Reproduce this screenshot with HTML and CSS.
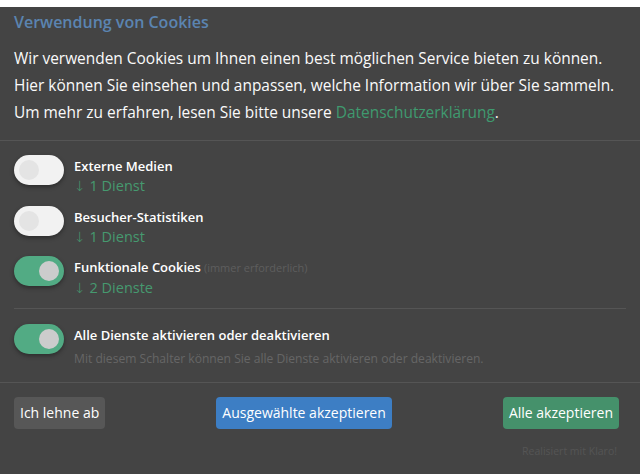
FILE: index.html
```html
<!DOCTYPE html>
<html lang="de">
<head>
<meta charset="utf-8">
<title>Cookies</title>
<link rel="stylesheet" href="styles.css">
</head>
<body>
<div class="modal">
  <div class="header">
    <h1 class="title">Verwendung von Cookies</h1>
    <p class="intro">Wir verwenden Cookies um Ihnen einen best möglichen Service bieten zu können. Hier können Sie einsehen und anpassen, welche Information wir über Sie sammeln. Um mehr zu erfahren, lesen Sie bitte unsere <a href="#" class="link">Datenschutzerklärung</a>.</p>
  </div>
  <div class="body">
    <ul class="purposes">
      <li class="purpose">
        <span class="switch"><span class="knob"></span></span>
        <div class="info">
          <div class="ptitle">Externe Medien</div>
          <div class="services"><span class="arrow">↓</span> 1 Dienst</div>
        </div>
      </li>
      <li class="purpose">
        <span class="switch"><span class="knob"></span></span>
        <div class="info">
          <div class="ptitle">Besucher-Statistiken</div>
          <div class="services"><span class="arrow">↓</span> 1 Dienst</div>
        </div>
      </li>
      <li class="purpose">
        <span class="switch on"><span class="knob"></span></span>
        <div class="info">
          <div class="ptitle">Funktionale Cookies<span class="required">(immer erforderlich)</span></div>
          <div class="services"><span class="arrow">↓</span> 2 Dienste</div>
        </div>
      </li>
    </ul>
    <div class="toggle-all">
      <span class="switch on"><span class="knob"></span></span>
      <div class="info">
        <div class="ptitle">Alle Dienste aktivieren oder deaktivieren</div>
        <div class="desc">Mit diesem Schalter können Sie alle Dienste aktivieren oder deaktivieren.</div>
      </div>
    </div>
  </div>
  <div class="footer">
    <div class="buttons">
      <button class="btn decline">Ich lehne ab</button>
      <button class="btn selected">Ausgewählte akzeptieren</button>
      <button class="btn all">Alle akzeptieren</button>
    </div>
    <div class="powered">Realisiert mit Klaro!</div>
  </div>
</div>
</body>
</html>
```

FILE: styles.css
```css
* { box-sizing: border-box; }
html, body { margin: 0; padding: 0; }
body {
  background: #ffffff;
  font-family: "Open Sans", "Noto Sans", sans-serif;
  height: 474px;
  overflow: hidden;
}
.modal {
  margin-top: 7px;
  background: #444444;
  color: #fafafa;
  height: 467px;
}
.header {
  padding: 4px 14px 14px 14px;
  border-bottom: 1px solid #555555;
}
.title {
  margin: 0;
  font-size: 16px;
  line-height: 22px;
  font-weight: 600;
  color: #5b84b1;
}
.intro {
  margin: 12px 0 0 0;
  font-size: 15.45px;
  line-height: 27px;
  font-weight: 400;
}
.link {
  color: #3f9a6f;
  text-decoration: none;
}
.body {
  padding: 14px 14px 0 14px;
  border-bottom: 1px solid #555555;
}
.purposes {
  list-style: none;
  margin: 0;
  padding: 0 0 10px 0;
  border-bottom: 1px solid #555555;
  display: flex;
  flex-direction: column;
  gap: 9.5px;
}
.purpose, .toggle-all {
  display: flex;
  gap: 10px;
  align-items: flex-start;
}
.toggle-all {
  padding: 15px 0 13px 0;
}
.switch {
  flex: none;
  width: 50px;
  height: 30px;
  border-radius: 15px;
  background: #f2f2f2;
  box-shadow: 0 2px 4px rgba(0, 0, 0, 0.35);
  display: flex;
  align-items: center;
  padding: 0 5px;
}
.knob {
  width: 20px;
  height: 20px;
  border-radius: 50%;
  background: #e4e4e4;
}
.switch.on {
  background: #52ab84;
  justify-content: flex-end;
}
.switch.on .knob {
  background: #cccccc;
}
.info {
  padding-top: 1px;
}
.ptitle {
  font-size: 13px;
  line-height: 20px;
  font-weight: 600;
  color: #ffffff;
}
.required {
  margin-left: 3px;
  font-size: 11px;
  font-weight: 400;
  color: #5e5e5e;
}
.services {
  font-size: 14.5px;
  line-height: 20px;
  color: #46996f;
}
.arrow {
  font-family: "DejaVu Sans", sans-serif;
  font-size: 14px;
  font-weight: 300;
}
.desc {
  margin-top: 4px;
  font-size: 12.1px;
  line-height: 20px;
  color: #666666;
}
.footer {
  padding: 14px 21px 0 14px;
}
.buttons {
  display: flex;
  justify-content: space-between;
}
.btn {
  font-family: "Open Sans", "Noto Sans", sans-serif;
  font-size: 14px;
  line-height: 20px;
  height: 32px;
  padding: 0 6px;
  border: none;
  border-radius: 4px;
  color: #ffffff;
}
.decline { background: #575757; }
.selected { background: #3d7ec4; }
.all { background: #45916b; }
.powered {
  margin-top: 14.5px;
  text-align: right;
  font-size: 10.5px;
  line-height: 15px;
  color: #555555;
  padding-right: 2px;
}
```
